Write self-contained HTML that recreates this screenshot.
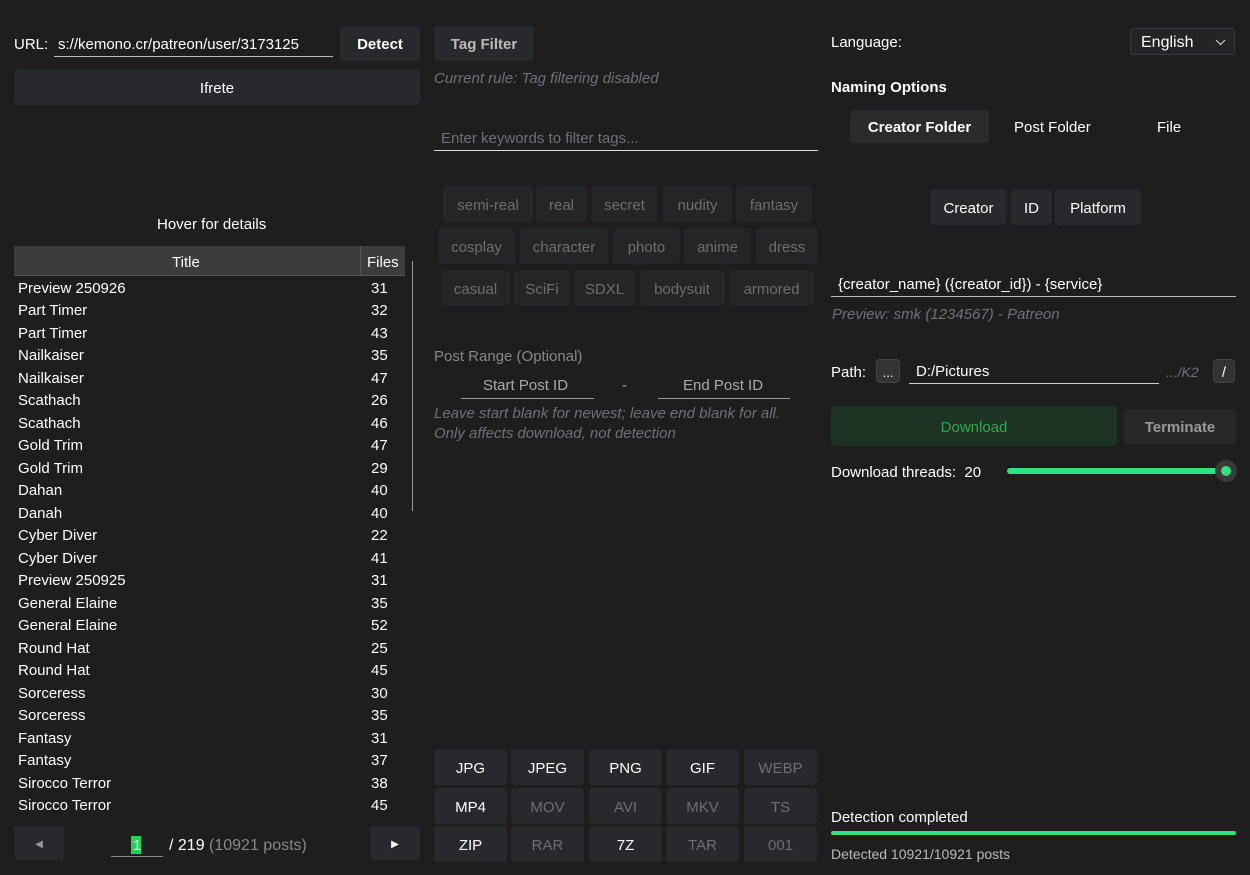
<!DOCTYPE html>
<html><head><meta charset="utf-8"><style>
*{box-sizing:border-box;margin:0;padding:0}
body{width:1250px;height:875px;background:#1e1e1e;color:#fff;font-family:"Liberation Sans",sans-serif;font-size:15px;position:relative;overflow:hidden}
.a{position:absolute;white-space:nowrap;line-height:21px}
.btn{position:absolute;background:#27292c;border-radius:4px;display:flex;align-items:center;justify-content:center;color:#fff;padding-top:2px}
.tag{position:absolute;background:#232527;border-radius:4px;display:flex;align-items:center;justify-content:center;color:#6c6e70;font-size:15px;padding-top:2px}
.dim{color:#6e7072}
.ul{position:absolute;height:1px;background:#bbb}
.row{position:absolute;left:18px;width:375px;height:22px;line-height:22px;padding-top:2px;display:flex;justify-content:space-between}
.row span:last-child{width:20px;margin-right:2px}
i{font-style:italic}
</style></head><body>
<div class="a" style="left:14px;top:34px">URL:</div>
<div class="a" style="left:58px;top:34px">s://kemono.cr/patreon/user/3173125</div>
<div class="ul" style="left:54px;top:56px;width:279px"></div>
<div class="btn" style="left:340px;top:26px;width:80px;height:35px;font-weight:bold">Detect</div>
<div class="btn" style="left:14px;top:69px;width:406px;height:36px">Ifrete</div>
<div class="a" style="left:157px;top:214px">Hover for details</div>
<div class="a" style="left:14px;top:246px;width:391px;height:30px;background:#3c3c3c;border-bottom:1px solid #555"></div>
<div class="a" style="left:360px;top:246px;width:1px;height:30px;background:#555"></div>
<div class="a" style="left:172px;top:252px">Title</div>
<div class="a" style="left:367px;top:252px">Files</div>
<div class="a" style="left:412px;top:261px;width:1px;height:250px;background:#999"></div>
<div id="rows"></div>
<div class="btn" style="left:14px;top:826px;width:50px;height:34px;font-size:10px;color:#999">◀</div>
<div class="btn" style="left:370px;top:826px;width:50px;height:34px;font-size:10px">▶</div>
<div class="a" style="left:131px;top:836px;width:10px;height:18px;background:#1fd35b"></div>
<div class="a" style="left:133px;top:835px">1</div>
<div class="ul" style="left:111px;top:856px;width:52px;background:#888"></div>
<div class="a" style="left:169px;top:835px;font-size:16px">/ 219 <span class="dim" style="color:#888">(10921 posts)</span></div>

<div class="btn" style="left:434px;top:26px;width:100px;height:35px;font-weight:bold;color:#bbb">Tag Filter</div>
<div class="a dim" style="left:434px;top:68px"><i>Current rule: Tag filtering disabled</i></div>
<div class="a dim" style="left:441px;top:128px">Enter keywords to filter tags...</div>
<div class="ul" style="left:434px;top:150px;width:384px;background:#ddd"></div>
<div class="tag" style="left:443px;top:186px;width:90px;height:36px">semi-real</div>
<div class="tag" style="left:536px;top:186px;width:51px;height:36px">real</div>
<div class="tag" style="left:591px;top:186px;width:67px;height:36px">secret</div>
<div class="tag" style="left:663px;top:186px;width:69px;height:36px">nudity</div>
<div class="tag" style="left:736px;top:186px;width:76px;height:36px">fantasy</div>
<div class="tag" style="left:438px;top:228px;width:77px;height:36px">cosplay</div>
<div class="tag" style="left:519px;top:228px;width:90px;height:36px">character</div>
<div class="tag" style="left:613px;top:228px;width:67px;height:36px">photo</div>
<div class="tag" style="left:684px;top:228px;width:67px;height:36px">anime</div>
<div class="tag" style="left:756px;top:228px;width:62px;height:36px">dress</div>
<div class="tag" style="left:441px;top:270px;width:69px;height:36px">casual</div>
<div class="tag" style="left:514px;top:270px;width:56px;height:36px">SciFi</div>
<div class="tag" style="left:574px;top:270px;width:61px;height:36px">SDXL</div>
<div class="tag" style="left:639px;top:270px;width:86px;height:36px">bodysuit</div>
<div class="tag" style="left:729px;top:270px;width:85px;height:36px">armored</div>
<div class="a" style="left:434px;top:346px;color:#888">Post Range (Optional)</div>
<div class="a" style="left:483px;top:375px;color:#aaa">Start Post ID</div>
<div class="ul" style="left:461px;top:398px;width:133px;background:#999"></div>
<div class="a" style="left:622px;top:375px;color:#aaa">-</div>
<div class="a" style="left:683px;top:375px;color:#aaa">End Post ID</div>
<div class="ul" style="left:658px;top:398px;width:132px;background:#999"></div>
<div class="a dim" style="left:434px;top:403px;line-height:20px;padding-top:1px"><i>Leave start blank for newest; leave end blank for all.<br>Only affects download, not detection</i></div>
<div id="ft"></div>

<div class="a" style="left:831px;top:32px">Language:</div>
<div class="btn" style="left:1130px;top:28px;width:105px;height:27px;border:1px solid #3a3a3a;justify-content:flex-start;padding-left:10px;font-size:16px;background:#232426">English<svg style="position:absolute;right:8px;top:10px" width="11" height="7"><path d="M1 1l4.5 4.5L10 1" stroke="#ccc" fill="none" stroke-width="1.2"/></svg></div>
<div class="a" style="left:831px;top:77px;font-weight:bold">Naming Options</div>
<div class="btn" style="left:850px;top:110px;width:139px;height:33px;font-weight:bold;background:#2a2b2d">Creator Folder</div>
<div class="a" style="left:1014px;top:117px">Post Folder</div>
<div class="a" style="left:1157px;top:117px">File</div>
<div class="btn" style="left:930px;top:189px;width:77px;height:36px">Creator</div>
<div class="btn" style="left:1011px;top:189px;width:41px;height:36px">ID</div>
<div class="btn" style="left:1055px;top:189px;width:86px;height:36px">Platform</div>
<div class="a" style="left:838px;top:274px">{creator_name} ({creator_id}) - {service}</div>
<div class="ul" style="left:831px;top:296px;width:405px"></div>
<div class="a dim" style="left:832px;top:304px"><i>Preview: smk (1234567) - Patreon</i></div>
<div class="a" style="left:831px;top:362px">Path:</div>
<div class="btn" style="left:876px;top:359px;width:24px;height:24px;background:#333;border:1px solid #444;font-size:13px">...</div>
<div class="a" style="left:916px;top:361px">D:/Pictures</div>
<div class="ul" style="left:909px;top:383px;width:250px;background:#ccc"></div>
<div class="a dim" style="left:1166px;top:362px;font-size:14px"><i>.../K2</i></div>
<div class="btn" style="left:1213px;top:359px;width:22px;height:24px;background:#333;border:1px solid #444">/</div>
<div class="btn" style="left:831px;top:406px;width:286px;height:40px;background:#1d3424;color:#2ea84a">Download</div>
<div class="btn" style="left:1124px;top:409px;width:112px;height:35px;background:#282828;color:#999;font-weight:bold">Terminate</div>
<div class="a" style="left:831px;top:462px">Download threads:&nbsp; 20</div>
<div class="a" style="left:1007px;top:468px;width:215px;height:6px;border-radius:3px;background:#2de383"></div>
<div class="a" style="left:1215px;top:460px;width:22px;height:22px;border-radius:50%;background:#3a3a3a"></div>
<div class="a" style="left:1221px;top:466px;width:10px;height:10px;border-radius:50%;background:#2de383"></div>
<div class="a" style="left:831px;top:807px">Detection completed</div>
<div class="a" style="left:831px;top:831px;width:405px;height:4px;border-radius:2px;background:#2de383"></div>
<div class="a" style="left:831px;top:844px;font-size:14px;color:#bbb">Detected 10921/10921 posts</div>
<script>
var d=[["Preview 250926",31],["Part Timer",32],["Part Timer",43],["Nailkaiser",35],["Nailkaiser",47],["Scathach",26],["Scathach",46],["Gold Trim",47],["Gold Trim",29],["Dahan",40],["Danah",40],["Cyber Diver",22],["Cyber Diver",41],["Preview 250925",31],["General Elaine",35],["General Elaine",52],["Round Hat",25],["Round Hat",45],["Sorceress",30],["Sorceress",35],["Fantasy",31],["Fantasy",37],["Sirocco Terror",38],["Sirocco Terror",45]];
var h="";d.forEach(function(r,i){h+='<div class="row" style="top:'+(276+i*22.48)+'px"><span>'+r[0]+'</span><span>'+r[1]+'</span></div>'});
document.getElementById("rows").innerHTML=h;
var f=[["JPG",1],["JPEG",1],["PNG",1],["GIF",1],["WEBP",0],["MP4",1],["MOV",0],["AVI",0],["MKV",0],["TS",0],["ZIP",1],["RAR",0],["7Z",1],["TAR",0],["001",0]];
var xs=[434,511,589,666,744],ys=[749,788,826];h="";
f.forEach(function(e,i){h+='<div class="btn" style="left:'+xs[i%5]+'px;top:'+ys[Math.floor(i/5)]+'px;width:73px;height:36px;'+(e[1]?'':'color:#6c6e70')+'">'+e[0]+'</div>'});
document.getElementById("ft").innerHTML=h;
</script>
</body></html>
